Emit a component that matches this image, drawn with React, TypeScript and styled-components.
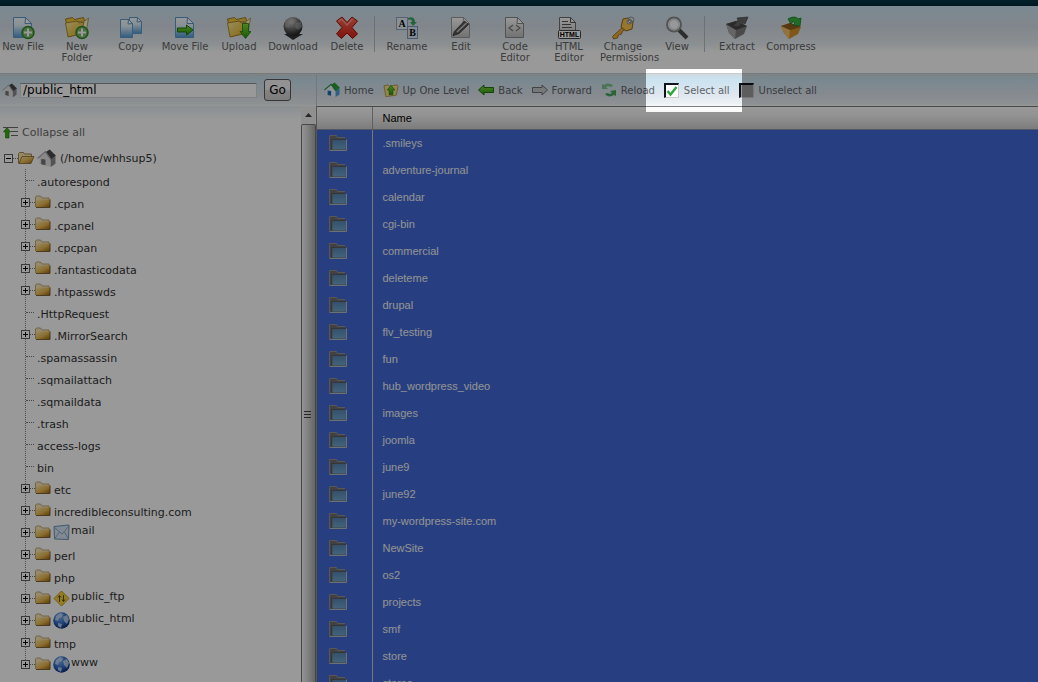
import React from 'react';
import styled, { createGlobalStyle, css } from 'styled-components';

const GlobalStyle = createGlobalStyle`
  * { box-sizing: border-box; }
  body {
    margin: 0;
    overflow: hidden;
    background: #fff;
    font-family: Verdana, "DejaVu Sans", sans-serif;
    font-size: 11px;
    color: #333;
  }
  svg { display: block; flex: none; }
  button, input { font-family: inherit; margin: 0; }
`;

const Page = styled.div`
  display: flex;
  flex-direction: column;
  height: 100vh;
  overflow: hidden;
`;

const TopStrip = styled.div`
  flex: none;
  height: 6px;
  background: linear-gradient(#003849, #002a38);
`;

const Toolbar = styled.header`
  flex: none;
  display: flex;
  align-items: flex-start;
  height: 68px;
  padding: 10px 0 0;
  background: linear-gradient(#cde6f3 0, #d8e0ea 20px, #e8eff2 38px, #fff 46px);
  border-bottom: 1px solid #c6ccd0;
`;

const ToolGroup = styled.div<{ $first?: boolean }>`
  display: flex;
  margin-left: ${(p) => (p.$first ? '-4px' : '5px')};
`;

const ToolButton = styled.button`
  display: flex;
  flex-direction: column;
  align-items: center;
  width: 54px;
  padding: 0;
  border: 0;
  background: none;
  color: #646464;
  font-size: 10px;
  line-height: 11px;
  gap: 1px;
  cursor: pointer;
`;

const ToolLabel = styled.span<{ $narrow?: boolean }>`
  width: ${(p) => (p.$narrow ? '46px' : 'auto')};
`;

const Separator = styled.div`
  width: 1px;
  height: 36px;
  background: #b3bcc2;
`;

const Columns = styled.div`
  flex: none;
  display: flex;
  height: 32px;
  background: linear-gradient(#d4d9dc 0, #c9e2ef 4px, #cfe4f0 9px, #dfe6ef 20px, #edf2f5 30px, #fafcfd 32px);
`;

const PathForm = styled.form`
  display: flex;
  align-items: center;
  width: 317px;
  padding: 0 0 0 2px;
  border-right: 1px solid #c0c8cf;
`;

const PathInput = styled.input`
  width: 237px;
  height: 15px;
  margin-left: 3px;
  padding: 0 2px;
  border: 1px solid #d4d9dd;
  border-top-color: #8d959b;
  background: #fff;
  color: #000;
  font-size: 12px;
`;

const GoButton = styled.button`
  width: 27px;
  height: 22px;
  margin-left: 7px;
  padding: 0;
  border: 1px solid #5c5c5c;
  border-radius: 3px;
  background: linear-gradient(#f4f4f4 50%, #dcdcdc 50%, #cfcfcf);
  color: #000;
  font-size: 12px;
`;

const NavBar = styled.nav`
  display: flex;
  flex: 1;
  align-items: stretch;
  gap: 9px;
  padding-left: 7px;
`;

const navItem = css`
  position: relative;
  display: flex;
  align-items: center;
  gap: 4px;
  padding: 0;
  color: #5f6468;
  font-size: 10px;
  white-space: nowrap;
  cursor: pointer;
`;

const NavButton = styled.button`
  ${navItem}
  border: 0;
  background: none;
`;

const CheckLabel = styled.label<{ $spotlight?: boolean }>`
  ${navItem}
  gap: 5px;
  ${(p) =>
    p.$spotlight &&
    css`
      &::after {
        content: '';
        position: absolute;
        z-index: 10;
        inset: -5px -12px -6px -18px;
        box-shadow: 0 0 0 2000px rgba(0, 0, 0, 0.4);
        pointer-events: none;
      }
    `}
`;

const CheckFrame = styled.span`
  display: grid;
  > * { grid-area: 1 / 1; }
  > svg { pointer-events: none; z-index: 1; }
`;

const Box = styled.input<{ $filled?: boolean }>`
  appearance: none;
  width: 15px;
  height: 15px;
  border: 1px solid #c8c8c8;
  border-top: 2px solid #10141a;
  border-left: 2px solid #10141a;
  background: ${(p) => (p.$filled ? '#9c9c9c' : '#fff')};
`;

const Body = styled.div`
  flex: 1;
  display: flex;
  min-height: 0;
`;

const Sidebar = styled.aside`
  width: 301px;
  padding: 18px 0 0 3px;
  background: linear-gradient(#e7eff5, #fff 14px);
  overflow: hidden;
`;

const ScrollBar = styled.div`
  display: flex;
  flex-direction: column;
  width: 16px;
  border-right: 1px solid #8f8f8f;
  background: #f4f4f4;
`;

const ScrollArrow = styled.button`
  display: flex;
  align-items: center;
  justify-content: center;
  height: 18px;
  padding: 0;
  border: 0;
  background: #f0f0f0;
`;

const ScrollThumb = styled.div`
  flex: 1;
  display: flex;
  align-items: center;
  justify-content: center;
  padding: 24px 2px 0 0;
  border: 1px solid #777;
  border-bottom: 0;
  border-radius: 2px 2px 0 0;
  background: linear-gradient(90deg, #f5f5f5, #dadada 40%, #a5aaa6);
`;

const CollapseButton = styled.button`
  display: flex;
  align-items: center;
  gap: 3px;
  height: 16px;
  padding: 0;
  border: 0;
  background: none;
  color: #6a6a6a;
  font-size: 11px;
`;

const TreeRoot = styled.div`
  display: flex;
  align-items: center;
  height: 29px;
  padding: 7px 0 0 1px;
`;

const RootName = styled.span`
  margin-left: 4px;
`;

const Dots = styled.span<{ $w: number }>`
  width: ${(p) => p.$w}px;
  border-top: 1px dotted #777;
`;

const TreeList = styled.ul`
  margin: 0 0 0 18px;
  padding: 0;
  list-style: none;
`;

const TreeItem = styled.li<{ $last?: boolean }>`
  display: flex;
  align-items: center;
  height: 22px;
  background: repeating-linear-gradient(#808080 0 1px, transparent 1px 2px) 4px 0 / 1px ${(p) => (p.$last ? '11px' : '100%')} no-repeat;
`;

const LeafDots = styled(Dots)`
  margin: 0 3px 0 5px;
`;

const Expander = styled.button`
  width: 9px;
  height: 9px;
  padding: 0;
  border: 1px solid #606060;
  background: #fff;
`;

const ExpanderSign = styled.svg`
  width: 7px;
  height: 7px;
`;

const ItemName = styled.span<{ $kind: 'leaf' | 'folder' | 'special' }>`
  line-height: 14px;
  margin-left: ${(p) => (p.$kind === 'folder' ? '3px' : p.$kind === 'special' ? '1px' : '0')};
  padding: ${(p) => (p.$kind === 'special' ? '0 0 2px' : '6px 0 0')};
`;

const SpecialIcon = styled.span`
  margin-left: 2px;
`;

const FilePane = styled.main`
  flex: 1;
  min-width: 0;
  overflow: hidden;
  background: #416ad8;
  border-top: 1px solid #7c7c7c;
`;

const FileTable = styled.table`
  width: 100%;
  border-collapse: collapse;
  table-layout: fixed;
  font-family: Arial, "Liberation Sans", sans-serif;
  font-size: 11px;
`;

const HeadCell = styled.th<{ $icon?: boolean }>`
  width: ${(p) => (p.$icon ? '55px' : 'auto')};
  height: 22px;
  padding: 0 0 0 10px;
  border-right: ${(p) => (p.$icon ? '1px solid #a0a0a0' : '0')};
  border-bottom: 1px solid #8992a8;
  background: linear-gradient(#fff, #f3f3f3 40%, #cfcfcf);
  color: #000;
  font-weight: 400;
  text-align: left;
`;

const IconCell = styled.td`
  height: 27px;
  padding: 1px 0 0 12px;
  border-right: 1px solid #c4c8d0;
`;

const NameCell = styled.td`
  height: 27px;
  padding: 1px 0 0 10px;
  color: #f4f4f4;
`;

/* ---------- icons ---------- */

const HiddenDefs = styled.svg`
  position: absolute;
`;

const Gradients = () => (
  <HiddenDefs width="0" height="0" aria-hidden="true">
    <defs>
      <linearGradient id="blueFade" x1="0" y1="0" x2="0" y2="1">
        <stop offset="0" stopColor="#fafdff" />
        <stop offset=".4" stopColor="#e3f1fb" />
        <stop offset="1" stopColor="#4f9ad6" />
      </linearGradient>
      <linearGradient id="greyPaper" x1="0" y1="0" x2="0" y2="1">
        <stop offset="0" stopColor="#fff" />
        <stop offset="1" stopColor="#bdbdbd" />
      </linearGradient>
      <linearGradient id="gold" x1="0" y1="0" x2="1" y2="1">
        <stop offset="0" stopColor="#fff1a0" />
        <stop offset="1" stopColor="#e0a818" />
      </linearGradient>
      <linearGradient id="folderGold" x1="0" y1="0" x2="1" y2="1">
        <stop offset="0" stopColor="#ffe9a8" />
        <stop offset=".55" stopColor="#e8b850" />
        <stop offset="1" stopColor="#9a6410" />
      </linearGradient>
      <linearGradient id="green" x1="0" y1="0" x2="0" y2="1">
        <stop offset="0" stopColor="#86dd3c" />
        <stop offset="1" stopColor="#279407" />
      </linearGradient>
      <linearGradient id="red" x1="0" y1="0" x2="0" y2="1">
        <stop offset="0" stopColor="#ff6a55" />
        <stop offset="1" stopColor="#d81f14" />
      </linearGradient>
      <radialGradient id="orb" cx=".4" cy=".25" r=".75">
        <stop offset="0" stopColor="#c8c8c8" />
        <stop offset=".5" stopColor="#707070" />
        <stop offset="1" stopColor="#202020" />
      </radialGradient>
      <radialGradient id="globe" cx=".4" cy=".3" r=".75">
        <stop offset="0" stopColor="#78b4f4" />
        <stop offset=".6" stopColor="#2a63c0" />
        <stop offset="1" stopColor="#0a2366" />
      </radialGradient>
      <linearGradient id="rowFolder" x1="0" y1="0" x2="0" y2="1">
        <stop offset="0" stopColor="#5a86b4" />
        <stop offset="1" stopColor="#6fa6cf" />
      </linearGradient>
    </defs>
  </HiddenDefs>
);

const Svg24 = ({ children }: { children: React.ReactNode }) => (
  <svg width="24" height="24" viewBox="0 0 24 24" aria-hidden="true">
    {children}
  </svg>
);

const PlusBadge = () => (
  <g>
    <circle cx="17" cy="16.500" r="6" fill="#7cb86a" stroke="#2f8a2a" strokeWidth="1.500" />
    <path d="M17 12.500v8M13 16.500h8" stroke="#fff" strokeWidth="2" />
  </g>
);

const OpenFolder = () => (
  <g>
    <path d="M.5 3l7-1.500 2 2 9-2 1 3v11l-15 5z" fill="#f0c840" stroke="#8a6510" strokeWidth=".8" />
    <path d="M9 6l11-1 3.500-3-2.500 15-12 2z" fill="#fff7cf" stroke="#a98428" strokeWidth=".8" />
    <path d="M.5 7l12-2 1.500 2 5-1-3 12-13 3z" fill="url(#gold)" stroke="#9a7216" strokeWidth=".8" />
  </g>
);

const Sheet = ({ fill = 'url(#blueFade)', stroke = '#5f9acb' }: { fill?: string; stroke?: string }) => (
  <g>
    <path d="M2.500 1.500h12l6 6v14h-18z" fill={fill} stroke={stroke} />
    <path d="M14.500 1.500l-.5 6 6.500 0z" fill="#fff" stroke={stroke} />
  </g>
);

const NewFileIcon = () => (<Svg24><Sheet /><PlusBadge /></Svg24>);
const NewFolderIcon = () => (<Svg24><OpenFolder /><PlusBadge /></Svg24>);
const CopyIcon = () => (
  <Svg24>
    <path d="M10.500 1.500h8l4 4v12h-12z" fill="url(#blueFade)" stroke="#5f9acb" />
    <path d="M18.500 1.500l-.5 4.500 4.500-.5z" fill="#fff" stroke="#5f9acb" />
    <path d="M1.500 3.500h8l4 4v14h-12z" fill="url(#blueFade)" stroke="#5f9acb" />
    <path d="M9.500 3.500l-.5 4.500 4.500-.5z" fill="#fff" stroke="#5f9acb" />
  </Svg24>
);
const MoveIcon = () => (
  <Svg24>
    <Sheet />
    <path d="M4.500 12h9V9l6.500 5-6.500 5v-3h-9z" fill="url(#green)" stroke="#1c7a0a" />
  </Svg24>
);
const UploadIcon = () => (
  <Svg24>
    <OpenFolder />
    <path d="M15.500 7.500h6v8h2.500L18.500 22.500 13 15.500h2.500z" fill="url(#green)" stroke="#1c7a0a" strokeWidth=".8" />
  </Svg24>
);
const DownloadIcon = () => (
  <Svg24>
    <path d="M6 14h12v4h4l-10 6-9-6h3z" fill="#343434" />
    <circle cx="12" cy="10.500" r="9.500" fill="url(#orb)" />
    <path d="M4 6c3-3 6-3 8-4l3 2-2 3-4 1-1 4-4-1zM15 7l5-1 1 5-4 3-3-3z" fill="#b4b4b4" opacity=".5" />
  </Svg24>
);
const DeleteIcon = () => (
  <Svg24>
    <path
      d="M1.500 5l5.500-4 5 5.500L17 1l5.500 4-5.500 6.500 5.500 6.500-5 4.500L12 17l-5.500 5.500-5-4.500L7 11.500z"
      fill="url(#red)"
      stroke="#9c120c"
    />
    <path d="M3.500 5.500l3-2.500L12 9l5.500-6" fill="none" stroke="#ff9a88" strokeWidth="1.200" />
  </Svg24>
);
const RenameIcon = () => (
  <Svg24>
    <rect x="1.500" y="1.500" width="11" height="12" fill="#eaf1f9" stroke="#8fa6c0" />
    <rect x="12.500" y="10.500" width="10" height="12" fill="#d6e5f4" stroke="#7f98b8" />
    <text x="7" y="11" textAnchor="middle" fontFamily="Liberation Serif, serif" fontSize="10" fontWeight="700" fill="#000">A</text>
    <text x="17.500" y="20" textAnchor="middle" fontFamily="Liberation Serif, serif" fontSize="10" fontWeight="700" fill="#000">B</text>
    <path d="M13 2c4-2 7 0 7 4h2l-4 4-3-4h2c0-2-1-3-4-2z" fill="#3aa65c" />
  </Svg24>
);
const EditIcon = () => (
  <Svg24>
    <Sheet fill="url(#greyPaper)" stroke="#9a9a9a" />
    <path d="M5.500 15.500L15.500 5l4 3.500-9.500 9-6 2z" fill="#5c5c5c" stroke="#2a2a2a" strokeWidth=".8" />
    <path d="M8 16L17.500 7" stroke="#c8c8c8" strokeWidth="1.500" />
  </Svg24>
);
const CodeIcon = () => (
  <Svg24>
    <Sheet fill="url(#greyPaper)" stroke="#8a8a8a" />
    <path d="M10 9l-4 3 4 3M13 9l4 3-4 3" fill="none" stroke="#777" strokeWidth="1.200" />
  </Svg24>
);
const HtmlIcon = () => (
  <Svg24>
    <path d="M2.500 1.500h11l5 5v15h-16z" fill="url(#greyPaper)" stroke="#707070" />
    <path d="M13.500 1.500v5h5M5 5.500h6M5 8.500h9M5 11.500h10" fill="none" stroke="#555" />
    <rect x="1.500" y="14.500" width="22" height="8" rx="1" fill="#fff" stroke="#444" />
    <text x="12.500" y="21" textAnchor="middle" fontFamily="Liberation Sans, sans-serif" fontSize="7" fontWeight="700" fill="#000">HTML</text>
  </Svg24>
);
const KeyIcon = () => (
  <Svg24>
    <path d="M13 10L1.500 20.500l1 2.500 4-1 1-3 3-1 1-3 4-2z" fill="#f0ae38" stroke="#8a5a10" strokeWidth=".8" />
    <path d="M12 3l5-1 5 4-1 7-6 2-5-4z" fill="#fbc552" stroke="#96650f" />
    <circle cx="18" cy="6" r="2" fill="#fff" stroke="#888" />
    <circle cx="20" cy="4" r="3" fill="none" stroke="#8896a4" />
  </Svg24>
);
const ViewIcon = () => (
  <Svg24>
    <path d="M14 14l8 8" stroke="#4b4b4b" strokeWidth="4" />
    <circle cx="9" cy="8.500" r="7" fill="#fcfdff" stroke="#8b8b8b" strokeWidth="2" />
    <circle cx="9" cy="8.500" r="5" fill="none" stroke="#d6dde4" strokeWidth="1.500" />
  </Svg24>
);
const ExtractIcon = () => (
  <Svg24>
    <path d="M1 8l10-3 11 5-3 8-9 5-6-6z" fill="#7c7c7c" />
    <path d="M1 8l10 6-1 9-6-6z" fill="#a8a8a8" />
    <path d="M1 8l10-3 11 5-11 4z" fill="#484848" />
    <path d="M8 10l5-6-1-2 11-1-3 7-2-1-5 4z" fill="#666" stroke="#3a3a3a" strokeWidth=".6" />
  </Svg24>
);
const CompressIcon = () => (
  <Svg24>
    <path d="M2 10l9-3 11 4-3 7-9 5-5-6z" fill="#d88f2a" />
    <path d="M2 10l9 4-1 9-5-6z" fill="#f4c069" />
    <path d="M2 10l9-3 11 4-11 3z" fill="#8f5e20" />
    <path d="M9 3c5-3 9-2 10 0l3-1-1 8-7-1 2-2c-1-2-3-1-4 1z" fill="#36b53c" stroke="#167a24" strokeWidth=".8" />
  </Svg24>
);

const HouseIcon = ({ size, color }: { size: number; color?: boolean }) => (
  <svg width={size} height={size} viewBox="0 0 18 18" aria-hidden="true">
    <path d="M2.500 8L8 3l5 6.500V17l-10.500-3z" fill={color ? '#eaf6ff' : '#e4e4e4'} />
    <path d="M13 9.500l4.500-2.500v7L13 17z" fill={color ? '#4f9fd8' : '#8c8c8c'} />
    <path d="M8 3l4-2.500L18 6.500l-5 3.500z" fill={color ? '#2aa02e' : '#484848'} />
    <path d="M.5 9L8 2.500l5 7" fill="none" stroke={color ? '#2e8a50' : '#a8a8a8'} strokeWidth="1.200" />
    <path d="M4 9.500l4 .5v5.500l-4-1z" fill={color ? '#1f6cb0' : '#777'} />
  </svg>
);

const UpIcon = () => (
  <svg width="16" height="15" viewBox="0 0 16 16" aria-hidden="true">
    <path d="M.5 3l4-1 2 1.500 8-1.500 1 2-2 9-11 1.500z" fill="#f7df86" stroke="#b3964a" />
    <path d="M8 2.500l4 5h-2v5H6v-5H4z" fill="url(#green)" stroke="#1d7b0b" strokeWidth=".7" />
  </svg>
);
const ArrowIcon = ({ back }: { back?: boolean }) => (
  <svg width="16" height="12" viewBox="0 0 16 12" aria-hidden="true">
    <path
      d={back ? 'M.5 6L6 1v2.500h9.500v5H6V11z' : 'M15.500 6L10 1v2.500H.5v5H10V11z'}
      fill={back ? 'url(#green)' : '#c6c9cb'}
      stroke={back ? '#206f12' : '#6b6f72'}
    />
  </svg>
);
const ReloadIcon = () => (
  <svg width="16" height="14" viewBox="0 0 16 14" aria-hidden="true">
    <path d="M1 6V1l2 1c3-2 7-2 9 1l-2 1C8 3 6 3 5 4l2 2z" fill="#7cc48a" />
    <path d="M15 7v6l-2-1c-3 2-7 2-9-1l2-1c2 1 4 1 5 0L9 8z" fill="#48a85c" />
  </svg>
);

const TickIcon = () => (
  <svg width="15" height="15" viewBox="0 0 15 15" aria-hidden="true">
    <path d="M3.500 8l3 3.500L12.500 4" fill="none" stroke="#2fa53c" strokeWidth="2.400" />
  </svg>
);

const TreeFolder = ({ open }: { open?: boolean }) => (
  <svg width={open ? 17 : 16} height="14" viewBox={open ? '0 0 17 14' : '0 0 16 14'} aria-hidden="true">
    {open ? (
      <g>
        <path d="M.5 12.500v-10l1-1h4l1 1.500h7v3" fill="#f8e6ae" stroke="#a5854a" />
        <path d="M1 12.500l3-7h12l-3 7z" fill="url(#folderGold)" stroke="#8a6424" strokeWidth=".8" />
      </g>
    ) : (
      <g>
        <path d="M.5 12V2l1-1h4l1.500 2H14v2" fill="#f7e8bc" stroke="#b09558" strokeWidth=".8" />
        <path d="M1 4.500h14V12H1z" fill="url(#folderGold)" />
        <path d="M15 4.500v8H1" fill="none" stroke="#6e5220" strokeWidth=".9" />
      </g>
    )}
  </svg>
);

const MailIcon = () => (
  <svg width="17" height="17" viewBox="0 0 17 17" aria-hidden="true">
    <path d="M1 2.500L16 1l-.5 14.500L1.500 15z" fill="#d8e6f6" stroke="#6f90b8" />
    <path d="M1 3l8 7 7-8M1.500 15l5-7M15.500 15l-4-7" fill="none" stroke="#8aa8cc" />
  </svg>
);
const FtpIcon = () => (
  <svg width="17" height="17" viewBox="0 0 17 17" aria-hidden="true">
    <path d="M8.500 1L16 8.500 8.500 16 1 8.500z" fill="#f7d238" stroke="#c39a1c" />
    <path d="M6.500 12V6M5 7.500L6.500 5.500 8 7.500M10.500 5v6M9 9.500l1.500 2L12 9.500" fill="none" stroke="#5e4c10" />
  </svg>
);
const GlobeIcon = () => (
  <svg width="17" height="17" viewBox="0 0 17 17" aria-hidden="true">
    <circle cx="8.500" cy="8.500" r="8.300" fill="url(#globe)" />
    <path d="M3 4l4-3 3 1-1 3-3 1-1 3-3-1zM10 5l4-2 2 4-2 5-3-3zM5 11l4 1-1 4-3-2z" fill="#cfe0f2" opacity=".8" />
  </svg>
);

const RowFolder = () => (
  <svg width="19" height="16" viewBox="0 0 19 16" aria-hidden="true">
    <path d="M.5 15V.5h7l1 2H16V5h2v10z" fill="#6e6c6c" />
    <path d="M.5 15V.5h7l1 2H16" fill="none" stroke="#94908c" />
    <path d="M3.500 5h14l-1 9.500h-13z" fill="url(#rowFolder)" />
    <path d="M2.500 14V4.500h15" fill="none" stroke="#565c64" />
    <path d="M17.500 4.500v11H.5" fill="none" stroke="#b4bcc4" />
  </svg>
);

const CollapseIcon = () => (
  <svg width="16" height="13" viewBox="0 0 16 13" aria-hidden="true">
    <path d="M4 1.500L7.500 6H6v6H2.500V6H.5z" fill="#3cae10" stroke="#1f6f0c" strokeWidth=".6" />
    <path d="M0 1.500h15M8 5.500h7M8 9.500h7" stroke="#6b6b6b" />
  </svg>
);

/* ---------- data ---------- */

type Tool = [string, React.ComponentType];

const toolGroups: Tool[][] = [
  [
    ['New File', NewFileIcon],
    ['New Folder', NewFolderIcon],
    ['Copy', CopyIcon],
    ['Move File', MoveIcon],
    ['Upload', UploadIcon],
    ['Download', DownloadIcon],
    ['Delete', DeleteIcon],
  ],
  [
    ['Rename', RenameIcon],
    ['Edit', EditIcon],
    ['Code Editor', CodeIcon],
    ['HTML Editor', HtmlIcon],
    ['Change Permissions', KeyIcon],
    ['View', ViewIcon],
  ],
  [
    ['Extract', ExtractIcon],
    ['Compress', CompressIcon],
  ],
];

const navItems: [string, React.ReactNode][] = [
  ['Home', <HouseIcon size={16} color />],
  ['Up One Level', <UpIcon />],
  ['Back', <ArrowIcon back />],
  ['Forward', <ArrowIcon />],
  ['Reload', <ReloadIcon />],
];

type Node = { name: string; leaf?: boolean; icon?: React.ReactNode };

const tree: Node[] = [
  { name: '.autorespond', leaf: true },
  { name: '.cpan' },
  { name: '.cpanel' },
  { name: '.cpcpan' },
  { name: '.fantasticodata' },
  { name: '.htpasswds' },
  { name: '.HttpRequest', leaf: true },
  { name: '.MirrorSearch' },
  { name: '.spamassassin', leaf: true },
  { name: '.sqmailattach', leaf: true },
  { name: '.sqmaildata', leaf: true },
  { name: '.trash', leaf: true },
  { name: 'access-logs', leaf: true },
  { name: 'bin', leaf: true },
  { name: 'etc' },
  { name: 'incredibleconsulting.com' },
  { name: 'mail', icon: <MailIcon /> },
  { name: 'perl' },
  { name: 'php' },
  { name: 'public_ftp', icon: <FtpIcon /> },
  { name: 'public_html', icon: <GlobeIcon /> },
  { name: 'tmp' },
  { name: 'www', icon: <GlobeIcon /> },
];

const files = [
  '.smileys', 'adventure-journal', 'calendar', 'cgi-bin', 'commercial', 'deleteme', 'drupal',
  'flv_testing', 'fun', 'hub_wordpress_video', 'images', 'joomla', 'june9', 'june92',
  'my-wordpress-site.com', 'NewSite', 'os2', 'projects', 'smf', 'store', 'stores',
];

const Toggle = ({ open, label }: { open?: boolean; label: string }) => (
  <Expander type="button" aria-label={label}>
    <ExpanderSign viewBox="0 0 7 7" aria-hidden="true">
      <path d={open ? 'M1 3.500h5' : 'M1 3.500h5M3.500 1v5'} stroke="#000" />
    </ExpanderSign>
  </Expander>
);

export default function App() {
  return (
    <Page>
      <GlobalStyle />
      <Gradients />
      <TopStrip />
      <Toolbar>
        {toolGroups.map((group, i) => (
          <React.Fragment key={i}>
            {i > 0 && <Separator />}
            <ToolGroup $first={i === 0}>
              {group.map(([label, Icon]) => (
                <ToolButton key={label} type="button">
                  <Icon />
                  <ToolLabel $narrow={label.length > 12}>{label}</ToolLabel>
                </ToolButton>
              ))}
            </ToolGroup>
          </React.Fragment>
        ))}
      </Toolbar>
      <Columns>
        <PathForm onSubmit={(e) => e.preventDefault()}>
          <HouseIcon size={15} />
          <PathInput aria-label="Path" defaultValue="/public_html" />
          <GoButton type="submit">Go</GoButton>
        </PathForm>
        <NavBar>
          {navItems.map(([label, icon]) => (
            <NavButton key={label} type="button">
              {icon}
              {label}
            </NavButton>
          ))}
          <CheckLabel $spotlight>
            <CheckFrame>
              <Box type="checkbox" defaultChecked />
              <TickIcon />
            </CheckFrame>
            Select all
          </CheckLabel>
          <CheckLabel>
            <CheckFrame>
              <Box type="checkbox" $filled />
            </CheckFrame>
            Unselect all
          </CheckLabel>
        </NavBar>
      </Columns>
      <Body>
        <Sidebar>
          <CollapseButton type="button">
            <CollapseIcon />
            Collapse all
          </CollapseButton>
          <TreeRoot>
            <Toggle open label="Collapse home" />
            <Dots $w={5} />
            <TreeFolder open />
            <SpecialIcon>
              <HouseIcon size={19} />
            </SpecialIcon>
            <RootName>(/home/whhsup5)</RootName>
          </TreeRoot>
          <TreeList>
            {tree.map((node, i) => (
              <TreeItem key={node.name} $last={i === tree.length - 1}>
                {node.leaf ? (
                  <LeafDots $w={8} />
                ) : (
                  <>
                    <Toggle label={`Expand ${node.name}`} />
                    <Dots $w={5} />
                    <TreeFolder />
                    {node.icon && <SpecialIcon>{node.icon}</SpecialIcon>}
                  </>
                )}
                <ItemName $kind={node.leaf ? 'leaf' : node.icon ? 'special' : 'folder'}>{node.name}</ItemName>
              </TreeItem>
            ))}
          </TreeList>
        </Sidebar>
        <ScrollBar>
          <ScrollArrow type="button" aria-label="Scroll up">
            <svg width="7" height="4" viewBox="0 0 7 4" aria-hidden="true">
              <path d="M0 4l3.500-4L7 4z" fill="#444" />
            </svg>
          </ScrollArrow>
          <ScrollThumb>
            <svg width="7" height="9" viewBox="0 0 7 9" aria-hidden="true">
              <path d="M0 .5h7M0 3.500h7M0 6.500h7" stroke="#444" />
            </svg>
          </ScrollThumb>
        </ScrollBar>
        <FilePane>
          <FileTable>
            <thead>
              <tr>
                <HeadCell $icon aria-label="Type" />
                <HeadCell>Name</HeadCell>
              </tr>
            </thead>
            <tbody>
              {files.map((name) => (
                <tr key={name}>
                  <IconCell>
                    <RowFolder />
                  </IconCell>
                  <NameCell>{name}</NameCell>
                </tr>
              ))}
            </tbody>
          </FileTable>
        </FilePane>
      </Body>
    </Page>
  );
}
